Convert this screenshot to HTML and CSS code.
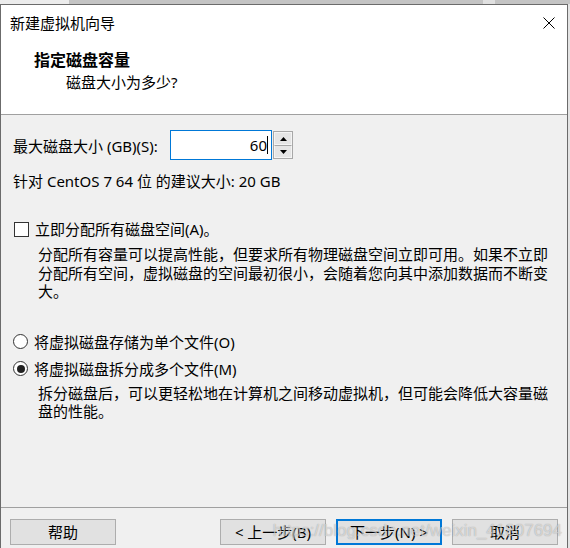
FILE: index.html
```html
<!DOCTYPE html>
<html lang="zh-CN">
<head>
<meta charset="utf-8">
<title>新建虚拟机向导</title>
<link rel="stylesheet" href="styles.css">
</head>
<body>
<div class="backdrop">
  <div class="bd-seg bd-light1"></div>
  <div class="bd-seg bd-dark1"></div>
  <div class="bd-seg bd-light2"></div>
  <div class="bd-seg bd-dark2"></div>
</div>
<div class="window">
  <div class="header">
    <div class="titlebar">
      <span class="title">新建虚拟机向导</span>
      <svg class="close" width="12" height="12" viewBox="0 0 12 12"><path d="M0.5 0.5L11.5 11.5M11.5 0.5L0.5 11.5" stroke="#000" stroke-width="1" fill="none"/></svg>
    </div>
    <div class="heading">指定磁盘容量</div>
    <div class="subheading">磁盘大小为多少?</div>
  </div>
  <div class="content">
    <div class="size-row">
      <span class="size-label">最大磁盘大小 (GB)(S):</span>
      <div class="input"><span class="value">60</span><span class="caret"></span></div>
      <div class="spin">
        <div class="spin-btn"><svg width="7" height="4" viewBox="0 0 7 4"><path d="M3.5 0L7 4H0Z" fill="#000"/></svg></div>
        <div class="spin-btn"><svg width="7" height="4" viewBox="0 0 7 4"><path d="M0 0H7L3.5 4Z" fill="#000"/></svg></div>
      </div>
    </div>
    <div class="suggest">针对 CentOS 7 64 位 的建议大小: 20 GB</div>
    <div class="option check-row">
      <span class="checkbox"></span>
      <span class="opt-label">立即分配所有磁盘空间(A)。</span>
    </div>
    <div class="desc">
      <div class="line">分配所有容量可以提高性能，但要求所有物理磁盘空间立即可用。如果不立即</div>
      <div class="line">分配所有空间，虚拟磁盘的空间最初很小，会随着您向其中添加数据而不断变</div>
      <div class="line">大。</div>
    </div>
    <div class="option radio-row first-radio">
      <span class="radio"></span>
      <span class="opt-label">将虚拟磁盘存储为单个文件(O)</span>
    </div>
    <div class="option radio-row second-radio">
      <span class="radio checked"><span class="dot"></span></span>
      <span class="opt-label">将虚拟磁盘拆分成多个文件(M)</span>
    </div>
    <div class="desc desc2">
      <div class="line">拆分磁盘后，可以更轻松地在计算机之间移动虚拟机，但可能会降低大容量磁</div>
      <div class="line">盘的性能。</div>
    </div>
  </div>
  <div class="footer">
    <button class="btn">帮助</button>
    <div class="spacer"></div>
    <button class="btn">&lt; 上一步(B)</button>
    <button class="btn btn-default">下一步(N) &gt;</button>
    <button class="btn">取消</button>
  </div>
</div>
<div class="watermark">https://blog.csdn.net/weixin_41807694</div>
</body>
</html>
```

FILE: styles.css
```css
* { box-sizing: border-box; }
html, body { margin: 0; padding: 0; }
body {
  width: 570px;
  height: 548px;
  overflow: hidden;
  background: #e4e4e4;
  font-family: "Noto Sans", "Noto Sans CJK SC", sans-serif;
  font-size: 15px;
  color: #000;
  position: relative;
}
.backdrop {
  display: flex;
  height: 4px;
}
.bd-light1 { width: 69px; background: #ececec; }
.bd-dark1 { width: 414px; background: #c4c4c4; }
.bd-light2 { width: 12px; background: #e0e0e0; }
.bd-dark2 { flex: 1; background: #c4c4c4; }

.window {
  width: 568px;
  height: 544px;
  border: 1px solid #6b6b6b;
  border-bottom: none;
  display: flex;
  flex-direction: column;
  overflow: hidden;
  background: #f0f0f0;
}
.header {
  height: 110px;
  background: #fff;
  border-bottom: 1px solid #a0a0a0;
  flex-shrink: 0;
}
.titlebar {
  height: 36px;
  display: flex;
  align-items: center;
  justify-content: space-between;
  padding: 0 12px 0 9px;
}
.title { line-height: 36px; }
.close { display: block; }
.heading {
  margin-top: 9px;
  padding-left: 33px;
  line-height: 20px;
  font-size: 16px;
  font-weight: bold;
}
.subheading {
  margin-top: 2px;
  padding-left: 65px;
  line-height: 20px;
}
.content {
  flex: 1;
  padding: 15px 0 0 12px;
}
.size-row {
  display: flex;
  align-items: center;
  height: 30px;
}
.size-label {
  width: 157px;
  line-height: 20px;
  padding-top: 2px;
  white-space: nowrap;
}
.input {
  width: 102px;
  height: 30px;
  border: 1px solid #0078d7;
  background: #fff;
  display: flex;
  justify-content: flex-end;
  align-items: center;
  padding-right: 3px;
}
.value { line-height: 20px; }
.caret {
  width: 1px;
  height: 18px;
  background: #000;
}
.spin {
  width: 20px;
  height: 28px;
  margin-left: 1px;
  display: flex;
  flex-direction: column;
  border: 1px solid #a8a8a8;
  background: #e5e5e5;
}
.spin-btn {
  flex: 1;
  display: flex;
  align-items: center;
  justify-content: center;
  border: 1px solid #f4f4f4;
}
.spin-btn + .spin-btn { border-top: 1px solid #a8a8a8; }
.spin-btn svg { display: block; }
.suggest {
  margin-top: 11px;
  line-height: 20px;
}
.option {
  display: flex;
  align-items: center;
  height: 20px;
}
.check-row { margin-top: 28px; }
.checkbox {
  width: 15px;
  height: 15px;
  border: 1px solid #333;
  background: #fff;
  margin-left: 1px;
  margin-right: 6px;
  flex-shrink: 0;
}
.opt-label { line-height: 20px; }
.desc {
  margin-top: 6px;
  padding-left: 25px;
  line-height: 18.5px;
}
.line { white-space: nowrap; }
.first-radio { margin-top: 31px; }
.second-radio { margin-top: 7px; }
.radio {
  width: 15px;
  height: 15px;
  border: 1px solid #333;
  border-radius: 50%;
  background: #fff;
  margin-left: 0;
  margin-right: 6px;
  display: flex;
  align-items: center;
  justify-content: center;
  flex-shrink: 0;
}
.dot {
  width: 8px;
  height: 8px;
  border-radius: 50%;
  background: #222;
}
.desc2 { margin-top: 5px; line-height: 18px; }
.footer {
  height: 41px;
  flex-shrink: 0;
  border-top: 1px solid #a0a0a0;
  padding: 11px 9px 0 9px;
  display: flex;
  align-items: flex-start;
  gap: 10px;
}
.spacer { flex: 1; }
.btn {
  width: 106px;
  height: 26px;
  border: 1px solid #adadad;
  background: #e1e1e1;
  font-family: "Noto Sans", "Noto Sans CJK SC", sans-serif;
  font-size: 15px;
  color: #000;
  padding: 0;
  line-height: 22px;
}
.btn-default { border: 2px solid #0078d7; }
.watermark {
  position: absolute;
  right: 8px;
  top: 518px;
  font-family: "Liberation Sans", Arial, sans-serif;
  font-size: 17px;
  line-height: 26px;
  color: rgba(255, 255, 255, 0.55);
  text-shadow: 0 0 1px rgba(0, 0, 0, 0.35);
  white-space: nowrap;
  pointer-events: none;
}
```
